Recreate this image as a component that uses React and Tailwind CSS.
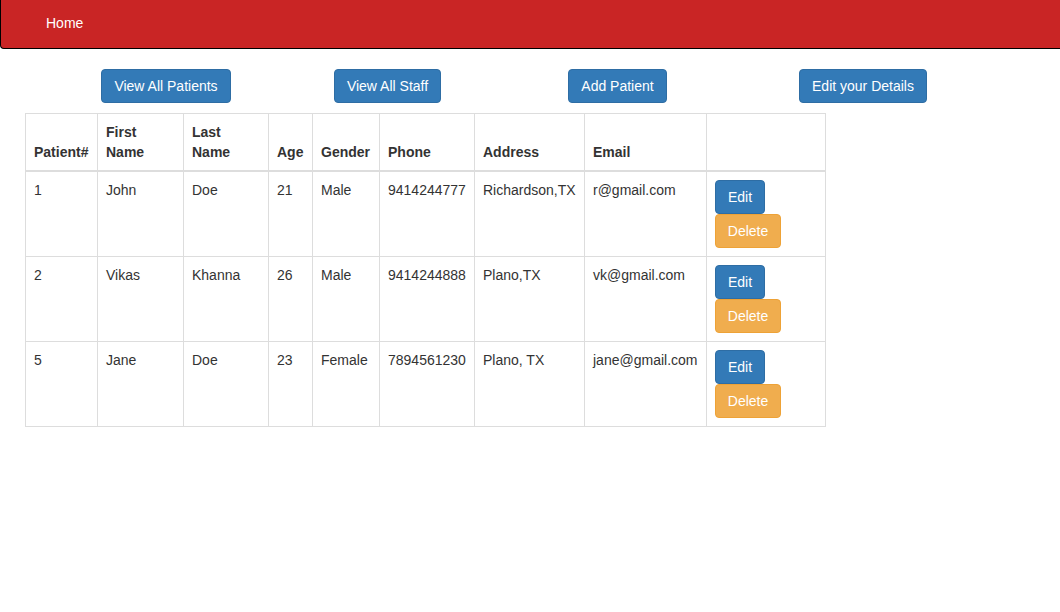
import React from 'react';

const patients = [
  { id: '1', first: 'John', last: 'Doe', age: '21', gender: 'Male', phone: '9414244777', address: 'Richardson,TX', email: 'r@gmail.com' },
  { id: '2', first: 'Vikas', last: 'Khanna', age: '26', gender: 'Male', phone: '9414244888', address: 'Plano,TX', email: 'vk@gmail.com' },
  { id: '5', first: 'Jane', last: 'Doe', age: '23', gender: 'Female', phone: '7894561230', address: 'Plano, TX', email: 'jane@gmail.com' },
];

const btnPrimary = 'h-[34px] px-0 whitespace-nowrap rounded-[4px] border border-[#2e6da4] bg-[#337ab7] text-white text-[14px] leading-5';

const App = () => {
  return (
    <div className="min-h-[612px] bg-white text-[#333] text-[14px] leading-5" style={{ fontFamily: '"Liberation Sans", Arial, sans-serif' }}>
      {/* top nav */}
      <div className="h-[49px] bg-[#c92525] border-l border-b border-black rounded-bl-[4px] flex items-center">
        <span className="ml-[45px] text-white -mt-[2px]">Home</span>
      </div>

      {/* action buttons */}
      <div className="flex mt-[20px]">
        <button className={`${btnPrimary} ml-[101px] w-[130px]`}>View All Patients</button>
        <button className={`${btnPrimary} ml-[103px] w-[107px]`}>View All Staff</button>
        <button className={`${btnPrimary} ml-[127px] w-[99px]`}>Add Patient</button>
        <button className={`${btnPrimary} ml-[132px] w-[128px]`}>Edit your Details</button>
      </div>

      {/* patients table */}
      <table className="ml-[25px] mt-[10px] border-collapse border border-[#ddd] text-left">
        <thead>
          <tr className="align-bottom font-bold">
            <th className="w-[72px] p-2 border border-[#ddd] border-b-2">Patient#</th>
            <th className="w-[86px] p-2 border border-[#ddd] border-b-2">First Name</th>
            <th className="w-[85px] p-2 border border-[#ddd] border-b-2">Last Name</th>
            <th className="w-[44px] p-2 border border-[#ddd] border-b-2">Age</th>
            <th className="w-[67px] p-2 border border-[#ddd] border-b-2">Gender</th>
            <th className="w-[95px] p-2 border border-[#ddd] border-b-2">Phone</th>
            <th className="w-[110px] p-2 border border-[#ddd] border-b-2">Address</th>
            <th className="w-[122px] p-2 border border-[#ddd] border-b-2">Email</th>
            <th className="w-[119px] p-2 border border-[#ddd] border-b-2"></th>
          </tr>
        </thead>
        <tbody>
          {patients.map((p) => (
            <tr key={p.id} className="align-top">
              <td className="p-2 border border-[#ddd]">{p.id}</td>
              <td className="p-2 border border-[#ddd]">{p.first}</td>
              <td className="p-2 border border-[#ddd]">{p.last}</td>
              <td className="p-2 border border-[#ddd]">{p.age}</td>
              <td className="p-2 border border-[#ddd]">{p.gender}</td>
              <td className="p-2 border border-[#ddd]">{p.phone}</td>
              <td className="p-2 border border-[#ddd] whitespace-nowrap">{p.address}</td>
              <td className="p-2 border border-[#ddd]">{p.email}</td>
              <td className="p-2 border border-[#ddd]">
                <div className="flex flex-col items-start">
                  <button className={`${btnPrimary} w-[50px]`}>Edit</button>
                  <button className="h-[34px] w-[66px] rounded-[4px] border border-[#eea236] bg-[#f0ad4e] text-white text-[14px] leading-5">Delete</button>
                </div>
              </td>
            </tr>
          ))}
        </tbody>
      </table>
    </div>
  );
};

export default App;
